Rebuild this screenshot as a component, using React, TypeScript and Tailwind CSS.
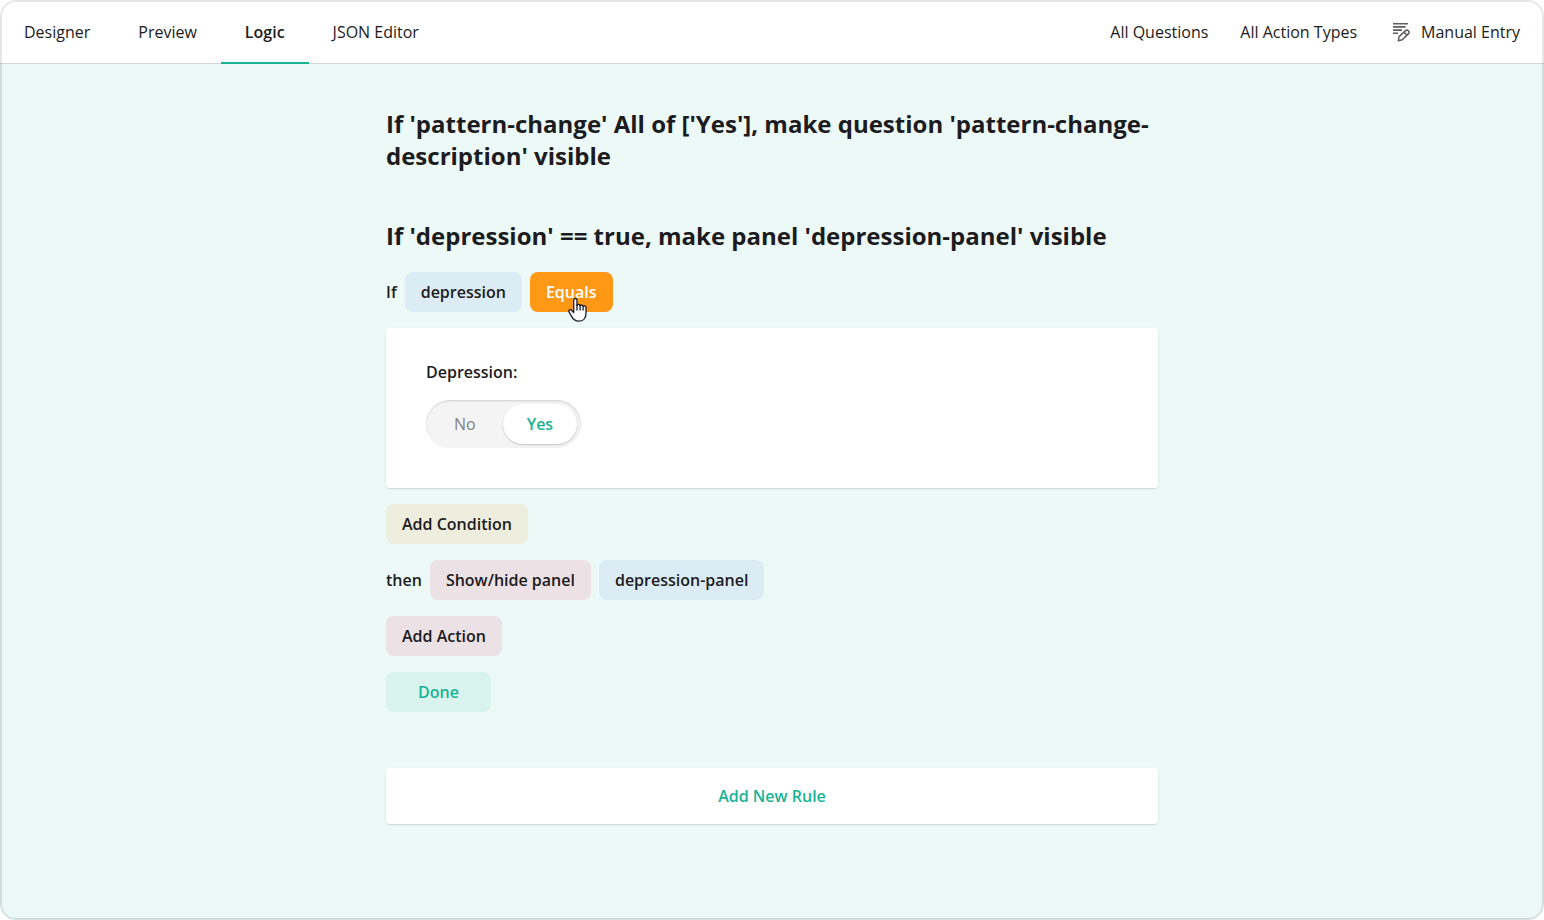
import React, { useState } from "react";
import clsx from "clsx";

const tabs = ["Designer", "Preview", "Logic", "JSON Editor"];

const tokenColors = {
  question: "bg-[#dcecf4]",
  condition: "bg-[#eeeedf]",
  action: "bg-[#ece1e5]",
};

function Token({ kind, children }: { kind: keyof typeof tokenColors; children: React.ReactNode }) {
  return (
    <button type="button" className={clsx("h-10 px-4 rounded-lg font-semibold", tokenColors[kind])}>
      {children}
    </button>
  );
}

function ManualEntryIcon() {
  return (
    <svg className="w-6 h-6" viewBox="0 0 24 24" fill="none" stroke="#5f5f62" aria-hidden="true">
      <path d="M4 3.7h15M4 6.9h12.5M4 10.1h9M4 13.2h5" strokeWidth="1.6" />
      <path
        d="M9.3 20.7l.8-4.1 6.1-5.7c1-.9 2.3-.9 3.2-.1.9.9.9 2.1 0 3.1l-6.1 5.8-4 1zM15 12.2l3 2.9"
        strokeWidth="1.5"
        strokeLinejoin="round"
      />
    </svg>
  );
}

function HandCursor() {
  return (
    <svg
      className="absolute left-[38px] top-[25px] w-5 h-[26px] pointer-events-none"
      viewBox="0 0 20 26"
      fill="#fff"
      stroke="#1b1b2b"
      strokeWidth="1.3"
      strokeLinejoin="round"
      strokeLinecap="round"
      aria-hidden="true"
    >
      <path d="M5.7 15.5V3.2c0-2.3 3.3-2.3 3.3 0v5.2c.2-1.4 3-1.3 3.1.4.4-1.2 2.9-1 3 .6.5-1 2.9-.8 2.9 1.3v5.5c0 5-2.9 8-7.2 8-3.5 0-5.6-1.7-7.2-4.8L1 14.9c-.8-2 1.5-3 2.8-1.4l1.9 2z" />
      <path d="M9 8v5M12.1 9v4M15.1 10v3" fill="none" />
    </svg>
  );
}

export default function App() {
  const [activeTab, setActiveTab] = useState("Logic");
  const [depression, setDepression] = useState("Yes");

  return (
    <div className="relative min-h-screen rounded-2xl overflow-hidden bg-[#ecf9f7] font-['Open_Sans',sans-serif] text-base leading-6 text-[#1c1b20]">
      {/* Top bar */}
      <header className="h-16 flex justify-between bg-white border-b border-[#d3d4d4]">
        <nav className="flex">
          {tabs.map((tab) => (
            <button
              key={tab}
              type="button"
              onClick={() => setActiveTab(tab)}
              className={clsx(
                "h-16 px-6 border-y-2 border-t-transparent",
                activeTab === tab ? "border-b-[#19b394] font-semibold" : "border-b-transparent"
              )}
            >
              {tab}
            </button>
          ))}
        </nav>
        <div className="flex items-center gap-8 pr-6">
          <button type="button">All Questions</button>
          <button type="button">All Action Types</button>
          <button type="button" className="flex items-center gap-2">
            <ManualEntryIcon />
            Manual Entry
          </button>
        </div>
      </header>

      {/* Rules */}
      <main className="max-w-[772px] mx-auto pt-11 pb-16">
        <h2 className="text-2xl leading-8 font-bold">
          If 'pattern-change' All of ['Yes'], make question 'pattern-change-description' visible
        </h2>

        <section className="mt-12">
          <h2 className="text-2xl leading-8 font-bold">
            If 'depression' == true, make panel 'depression-panel' visible
          </h2>

          <div className="mt-5 flex flex-col items-start gap-4">
            <div className="flex items-center gap-2">
              <span className="font-semibold">If</span>
              <Token kind="question">depression</Token>
              <button type="button" className="relative h-10 px-4 rounded-lg bg-[#ff9814] text-white font-semibold">
                Equals
                <HandCursor />
              </button>
            </div>

            <fieldset className="w-full px-10 pt-8 pb-10 rounded bg-white shadow-[0_1px_2px_rgba(0,0,0,0.15)]">
              <legend className="float-left w-full mb-4 font-semibold">Depression:</legend>
              <div className="clear-both w-fit h-12 p-1 flex gap-[3px] rounded-full bg-[#f4f4f4] shadow-[inset_0_1px_2px_rgba(0,0,0,0.15)]">
                {["No", "Yes"].map((option) => (
                  <label
                    key={option}
                    className={clsx(
                      "relative h-10 px-6 flex items-center rounded-full cursor-pointer",
                      depression === option
                        ? "bg-white text-[#19b394] font-semibold shadow-[0_1px_2px_rgba(0,0,0,0.2)]"
                        : "text-[#818181]"
                    )}
                  >
                    <input
                      type="radio"
                      name="depression"
                      value={option}
                      checked={depression === option}
                      onChange={() => setDepression(option)}
                      className="sr-only"
                    />
                    {option}
                  </label>
                ))}
              </div>
            </fieldset>

            <Token kind="condition">Add Condition</Token>

            <div className="flex items-center gap-2">
              <span className="font-semibold">then</span>
              <Token kind="action">Show/hide panel</Token>
              <Token kind="question">depression-panel</Token>
            </div>

            <Token kind="action">Add Action</Token>

            <button type="button" className="h-10 px-8 rounded-lg bg-[#d9f3ee] text-[#19b394] font-semibold">
              Done
            </button>
          </div>
        </section>

        <button
          type="button"
          className="mt-14 w-full h-14 rounded bg-white text-[#19b394] font-semibold shadow-[0_1px_2px_rgba(0,0,0,0.15)]"
        >
          Add New Rule
        </button>
      </main>

      {/* Frame outline, drawn above the header and the page background */}
      <div className="absolute inset-0 rounded-2xl border-2 border-black/10 pointer-events-none" />
    </div>
  );
}
